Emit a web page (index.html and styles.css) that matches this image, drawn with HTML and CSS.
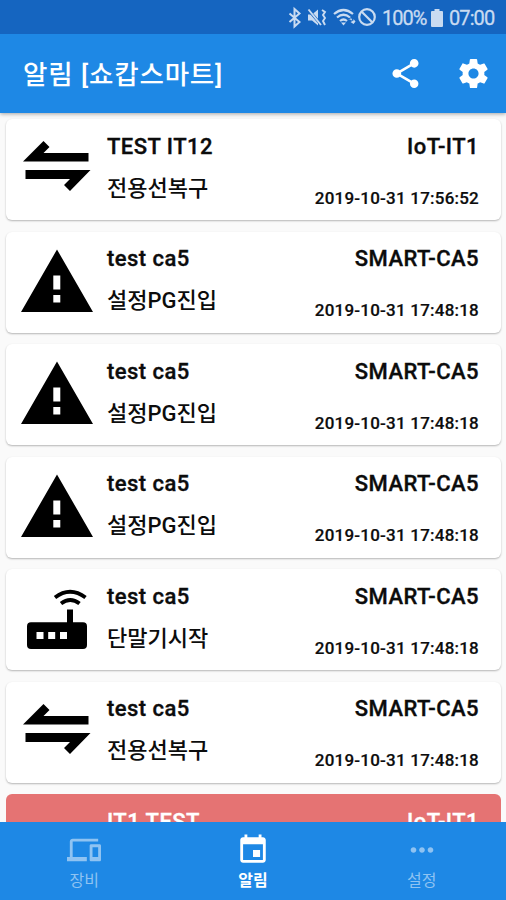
FILE: index.html
```html
<!DOCTYPE html>
<html lang="ko">
<head>
<meta charset="utf-8">
<title>알림</title>
<link rel="stylesheet" href="styles.css">
</head>
<body>
<svg class="defs" aria-hidden="true">
  <symbol id="swap" viewBox="6 119 96 101"><path d="M23 161.5L43.500 141l6 6-6 6H88.500v8.500zM25.500 170H90.500L70 191l-6-6 6-6H25.500z"/></symbol>
  <symbol id="warn" viewBox="6 231.500 96 101"><path fill-rule="evenodd" d="M57 249L93 311.500H21zM53.300 275v14h7V275zM53.300 294.500v7.500h7v-7.500z"/></symbol>
  <symbol id="router" viewBox="6 569 96 101"><path fill-rule="evenodd" d="M31 622.300h36V609.500h6v12.800h10a4 4 0 0 1 4 4V645a4 4 0 0 1-4 4H31a4 4 0 0 1-4-4v-18.700a4 4 0 0 1 4-4zM36.500 632v7h7v-7zM48.200 632v7h7v-7zM60 632v7h7v-7z"/><path d="M55 597.500q15-11.500 30.500 0M61 603.500q9.300-7 18.500 0" fill="none" stroke="currentColor" stroke-width="3.900"/></symbol>
</svg>
<div class="screen">
  <header>
    <div class="status">
      <svg class="status-icons" viewBox="286 5 92 26" aria-hidden="true">
        <path d="M289.500 13.500l10 8.500-5 4.500V9l5 4.500-10 8.500" fill="none" stroke="currentColor" stroke-width="2"/>
        <path d="M308 14.500h4l6-5v16l-6-5h-4z"/>
        <path d="M308.500 10l12 14" stroke="#1565c0" stroke-width="2.800"/>
        <path d="M308.500 9.500l12.500 15.500M322 10l3 2-2 3 2 3-2 3 2 4" fill="none" stroke="currentColor" stroke-width="1.900"/>
        <path d="M334 14q9.500-8 19 0M337 17.500q6.500-5.500 13 0M340 21q3.500-3 7 0" fill="none" stroke="currentColor" stroke-width="2.200"/>
        <path d="M341 22.500h5l-2.500 3zM348 19.500h2.500v-2.500l2 3.500zM350.500 22l3-1.500v-1.500l2 2.500-2 2.500z"/>
        <circle cx="367" cy="17" r="7.800" fill="none" stroke="currentColor" stroke-width="2.200"/>
        <path d="M361.500 11.500l11 11" stroke="currentColor" stroke-width="2.200"/>
      </svg>
      <span class="percent">100%</span>
      <svg class="battery" viewBox="0 0 12 18" aria-hidden="true"><path d="M3.500 0h5v2H11q1 0 1 1v14q0 1-1 1H1q-1 0-1-1V3q0-1 1-1h2.500z"/></svg>
      <span class="clock">07:00</span>
    </div>
    <div class="toolbar">
      <h1>알림 [쇼캅스마트]</h1>
      <svg class="share" viewBox="3 2 18 20" aria-hidden="true"><path d="M18 16.080c-.76 0-1.440.3-1.960.77L8.910 12.700c.05-.23.09-.46.09-.7s-.04-.47-.09-.7l7.050-4.110c.54.5 1.250.81 2.040.81 1.660 0 3-1.340 3-3s-1.340-3-3-3-3 1.340-3 3c0 .24.04.47.09.7L8.040 9.810C7.500 9.310 6.790 9 6 9c-1.660 0-3 1.340-3 3s1.340 3 3 3c.79 0 1.500-.31 2.040-.81l7.120 4.160c-.05.21-.08.43-.08.65 0 1.610 1.310 2.920 2.920 2.920s2.920-1.310 2.920-2.920-1.310-2.920-2.920-2.920z"/></svg>
      <svg class="gear" viewBox="2 2 20 20" aria-hidden="true"><path d="M19.430 12.980c.04-.32.07-.64.07-.98s-.03-.66-.07-.98l2.110-1.650c.19-.15.24-.42.12-.64l-2-3.460c-.12-.22-.39-.3-.61-.22l-2.490 1c-.52-.4-1.080-.73-1.690-.98l-.38-2.650C14.460 2.180 14.250 2 14 2h-4c-.25 0-.46.18-.49.42l-.38 2.650c-.61.25-1.170.59-1.690.98l-2.490-1c-.23-.09-.49 0-.61.22l-2 3.460c-.13.22-.07.49.12.64l2.110 1.650c-.04.32-.07.65-.07.98s.03.66.07.98l-2.110 1.650c-.19.15-.24.42-.12.64l2 3.460c.12.22.39.3.61.22l2.490-1c.52.4 1.080.73 1.690.98l.38 2.650c.03.24.24.42.49.42h4c.25 0 .46-.18.49-.42l.38-2.650c.61-.25 1.170-.59 1.690-.98l2.490 1c.23.09.49 0 .61-.22l2-3.460c.12-.22.07-.49-.12-.64l-2.110-1.650zM12 15.500c-1.930 0-3.500-1.570-3.500-3.500s1.570-3.500 3.500-3.500 3.500 1.570 3.500 3.500-1.570 3.500-3.500 3.500z"/></svg>
    </div>
  </header>
  <main>
    <article class="card"><svg><use href="#swap"/></svg><div class="left"><h2>TEST IT12</h2><p>전용선복구</p></div><div class="right"><h2>IoT-IT1</h2><time>2019-10-31 17:56:52</time></div></article>
    <article class="card"><svg><use href="#warn"/></svg><div class="left"><h2>test ca5</h2><p>설정PG진입</p></div><div class="right"><h2>SMART-CA5</h2><time>2019-10-31 17:48:18</time></div></article>
    <article class="card"><svg><use href="#warn"/></svg><div class="left"><h2>test ca5</h2><p>설정PG진입</p></div><div class="right"><h2>SMART-CA5</h2><time>2019-10-31 17:48:18</time></div></article>
    <article class="card"><svg><use href="#warn"/></svg><div class="left"><h2>test ca5</h2><p>설정PG진입</p></div><div class="right"><h2>SMART-CA5</h2><time>2019-10-31 17:48:18</time></div></article>
    <article class="card"><svg><use href="#router"/></svg><div class="left"><h2>test ca5</h2><p>단말기시작</p></div><div class="right"><h2>SMART-CA5</h2><time>2019-10-31 17:48:18</time></div></article>
    <article class="card"><svg><use href="#swap"/></svg><div class="left"><h2>test ca5</h2><p>전용선복구</p></div><div class="right"><h2>SMART-CA5</h2><time>2019-10-31 17:48:18</time></div></article>
    <article class="card alert"><svg></svg><div class="left"><h2>IT1 TEST</h2></div><div class="right"><h2>IoT-IT1</h2></div></article>
  </main>
  <nav>
    <a><svg viewBox="0 0 24 24" aria-hidden="true"><path d="M4 6h18V4H4c-1.100 0-2 .9-2 2v11H0v3h14v-3H4V6zm19 2h-6c-.55 0-1 .45-1 1v10c0 .55.45 1 1 1h6c.55 0 1-.45 1-1V9c0-.55-.45-1-1-1zm-1 9h-4v-7h4v7z"/></svg><span>장비</span></a>
    <a class="active"><svg viewBox="0 0 24 24" aria-hidden="true"><path d="M17 12h-5v5h5v-5zM16 1v2H8V1H6v2H5c-1.110 0-1.990.9-1.990 2L3 19c0 1.100.89 2 2 2h14c1.100 0 2-.9 2-2V5c0-1.100-.9-2-2-2h-1V1h-2zm3 18H5V8h14v11z"/></svg><span>알림</span></a>
    <a><svg viewBox="0 0 24 24" aria-hidden="true"><path d="M6 10c-1.100 0-2 .9-2 2s.9 2 2 2 2-.9 2-2-.9-2-2-2zm12 0c-1.100 0-2 .9-2 2s.9 2 2 2 2-.9 2-2-.9-2-2-2zm-6 0c-1.100 0-2 .9-2 2s.9 2 2 2 2-.9 2-2-.9-2-2-2z"/></svg><span>설정</span></a>
  </nav>
</div>
</body>
</html>
```
FILE: styles.css
```css
* { box-sizing: border-box; margin: 0; padding: 0; }
body { font-family: Roboto, "Noto Sans CJK KR", sans-serif; color: #0c0c0c; }
svg { fill: currentColor; flex: none; display: block; }
.defs { position: absolute; width: 0; height: 0; }
.screen { height: 900px; width: 506px; display: flex; flex-direction: column; overflow: hidden; background: #fafafa; }
header { flex: none; color: #fff; box-shadow: 0 1px 4px rgba(0, 0, 0, .35); }
.status { height: 34px; background: #1565c0; color: #c9dbf1; display: flex; align-items: center; padding: 2px 11px 0 286px; font-size: 20px; line-height: 32px; }
.status-icons { width: 92px; height: 26px; }
.percent { width: 48px; margin-left: 4px; letter-spacing: -1px; white-space: nowrap; -webkit-text-stroke: .3px; }
.battery { width: 12px; height: 18px; margin-left: 1px; }
.clock { margin-left: 6px; letter-spacing: -.9px; white-space: nowrap; -webkit-text-stroke: .3px; }
.toolbar { height: 79px; background: #1e88e5; display: flex; align-items: center; padding: 0 18px 0 23px; }
h1 { flex: 1; padding-top: 2px; font-size: 26.500px; line-height: 38px; font-weight: 500; letter-spacing: .85px; white-space: nowrap; }
.share { width: 27px; height: 29px; margin-right: 40px; }
.gear { width: 29px; height: 29px; }
main { flex: 1; min-height: 0; overflow: hidden; padding: 6px 5px 0 6px; display: flex; flex-direction: column; gap: 11.5px; }
.card { flex: none; height: 101px; background: #fff; border-radius: 6px; box-shadow: 0 1px 2px rgba(0, 0, 0, .28); display: flex; padding-right: 22px; }
.card > svg { width: 96px; height: 101px; color: #000; }
.left { flex: 1; padding: 13.5px 0 0 5px; }
.right { padding-top: 13.5px; text-align: right; }
h2 { font-size: 22px; line-height: 28px; font-weight: 500; letter-spacing: .45px; white-space: nowrap; -webkit-text-stroke: .35px; }
.card p { margin-top: 14px; font-size: 22px; line-height: 28px; font-weight: 500; white-space: nowrap; }
time { display: block; margin-top: 27px; font-size: 17px; line-height: 20px; font-weight: 500; letter-spacing: .22px; white-space: nowrap; -webkit-text-stroke: .2px; }
.alert { background: #e57373; color: #fff; box-shadow: none; }
nav { flex: none; height: 78px; background: #1e88e5; color: #8fc3f2; display: flex; }
nav a { flex: 1; display: flex; flex-direction: column; align-items: center; padding-top: 11px; font-size: 16px; line-height: 20px; }
nav svg { width: 34px; height: 34px; margin-bottom: 4px; }
.active { color: #fff; font-weight: 700; }
```
